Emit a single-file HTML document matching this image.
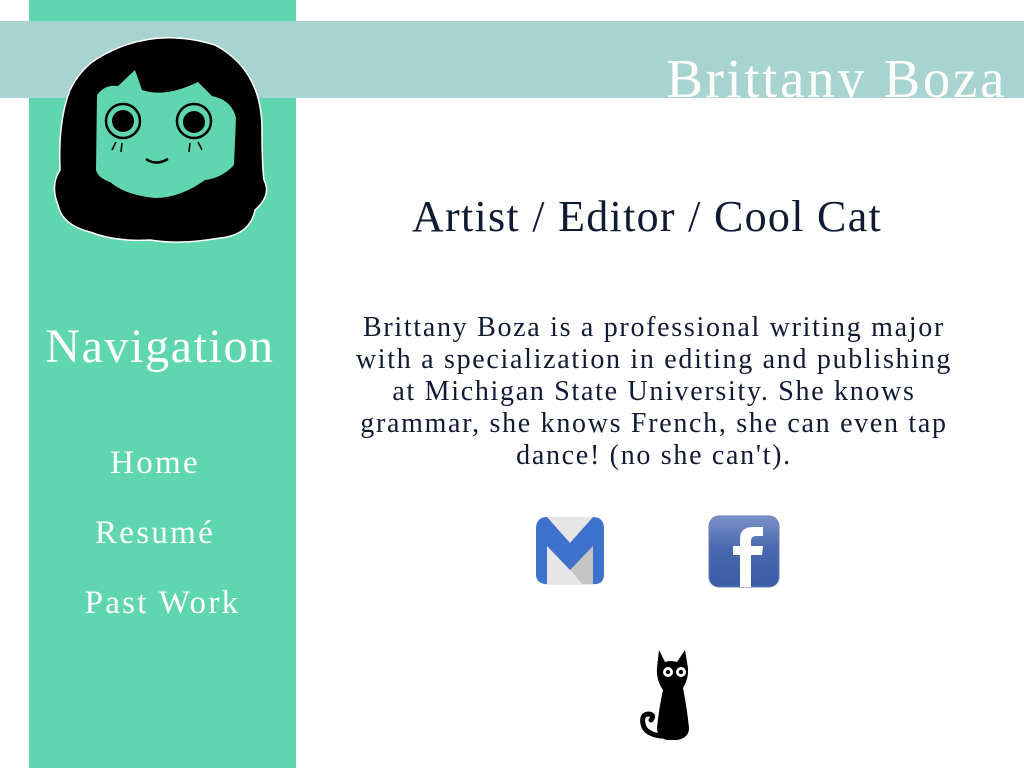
<!DOCTYPE html>
<html><head><meta charset="utf-8"><style>
*{margin:0;padding:0}
body{width:1024px;height:768px;position:relative;background:#fff;overflow:hidden;font-family:"Liberation Serif",serif}
#side{position:absolute;left:29px;top:0;width:267px;height:768px;background:#5fd6b0}
#bar{position:absolute;left:0;top:21px;width:1024px;height:77px;background:#a7d4d0;overflow:hidden}
#bar span{position:absolute;right:17px;top:30px;font-size:55px;line-height:55px;color:#fff;white-space:nowrap;letter-spacing:2.6px}
.t{position:absolute;white-space:nowrap;text-align:center}
#nav{left:29px;width:262px;top:319px;font-size:48px;letter-spacing:1.6px;color:#fff}
.n{font-size:33px;color:#fff;letter-spacing:2.3px}
#role{left:330px;width:634px;top:191px;font-size:44px;letter-spacing:1.3px;color:#101a33}
#para{left:330px;width:648px;top:312px;font-size:28px;letter-spacing:1.7px;line-height:32px;color:#101a33}
</style></head><body>
<div id="side"></div>
<div id="bar"><span>Brittany Boza</span></div>
<svg style="position:absolute;left:50px;top:28px" width="222" height="218" viewBox="50 28 222 218">
<path d="M95 60 Q150 25 215 45 Q262 70 262 130 Q262 165 264 180 Q272 195 255 210 Q250 235 220 238 Q180 245 150 240 Q115 242 90 232 Q62 225 58 205 Q50 185 60 170 Q58 120 70 90 Q80 70 95 60Z" fill="#000" stroke="#fff" stroke-width="1.5"/>
<path d="M97 95 Q105 84 118 86 L135 70 L142 90 Q165 98 198 82 L212 96 Q232 100 236 118 L234 165 Q222 178 205 180 Q180 198 155 198 Q125 195 110 182 Q98 178 96 170 Z" fill="#5fd6b0"/>
<circle cx="123" cy="121" r="17" fill="#5fd6b0" stroke="#000" stroke-width="2.5"/>
<circle cx="123" cy="121" r="11" fill="#000"/>
<circle cx="194" cy="121" r="17" fill="#5fd6b0" stroke="#000" stroke-width="2.5"/>
<circle cx="194" cy="122" r="11" fill="#000"/>
<path d="M116 142 L112 150 M122 143 L121 152 M190 143 L189 152 M198 142 L202 150" stroke="#000" stroke-width="1.5"/>
<path d="M146 159 Q156 166 168 159" fill="none" stroke="#000" stroke-width="2.5"/>
</svg>
<div class="t" id="nav">Navigation</div>
<div class="t n" style="left:29px;width:252px;top:445px">Home</div>
<div class="t n" style="left:29px;width:252px;top:515px">Resumé</div>
<div class="t n" style="left:29px;width:267px;top:585px">Past Work</div>
<div class="t" id="role">Artist / Editor / Cool Cat</div>
<div class="t" id="para">Brittany Boza is a professional writing major<br>with a specialization in editing and publishing<br>at Michigan State University. She knows<br>grammar, she knows French, she can even tap<br>dance! (no she can't).</div>
<svg style="position:absolute;left:535px;top:516px" width="70" height="70" viewBox="0 0 70 70">
<rect x="1" y="1" width="68" height="68" rx="12" fill="#e6e6e6"/>
<path d="M35 53 L68 20 L68 58 Q68 68 58 68 L47 68 Z" fill="#c4c4c4"/>
<path d="M1 13 Q1 1 12 1 L35 27 L58 1 Q69 1 69 13 L69 58 Q69 68 60 68 L58 68 L58 30 L35 54 L12 30 L12 68 Q1 68 1 58Z" fill="#3f72cc"/>
</svg>
<svg style="position:absolute;left:708px;top:515px" width="72" height="74" viewBox="0 0 72 74">
<defs><linearGradient id="g" x1="0" y1="0" x2="0" y2="1"><stop offset="0" stop-color="#7a93c7"/><stop offset="0.45" stop-color="#4a68b0"/><stop offset="1" stop-color="#3b5ba8"/></linearGradient></defs>
<rect x="1" y="1" width="70" height="71" rx="10" fill="url(#g)" stroke="#6a7fb0"/>
<path d="M32 72 L32 40 L25 40 L25 31 L32 31 L32 24 Q32 12 45 12 L55 12 L55 21 L48 21 Q43 21 43 26 L43 31 L55 31 L54 40 L43 40 L43 72Z" fill="#fff"/>
</svg>
<svg style="position:absolute;left:637px;top:648px" width="54" height="94" viewBox="0 0 54 94">
<path d="M22 2 L28 14 Q33 12 40 14 L48 2 L51 20 Q52 30 46 40 Q50 60 52 80 Q52 90 40 92 L30 92 Q20 90 20 80 Q22 60 26 42 Q19 32 20 20Z" fill="#000"/>
<path d="M24 88 Q8 86 6 76 Q4 66 12 66 Q18 67 14 72" fill="none" stroke="#000" stroke-width="5" stroke-linecap="round"/>
<circle cx="31" cy="24" r="5" fill="#fff"/><circle cx="31" cy="24" r="2.2" fill="#000"/>
<circle cx="44" cy="24" r="5" fill="#fff"/><circle cx="44" cy="24" r="2.2" fill="#000"/>
</svg>
</body></html>
